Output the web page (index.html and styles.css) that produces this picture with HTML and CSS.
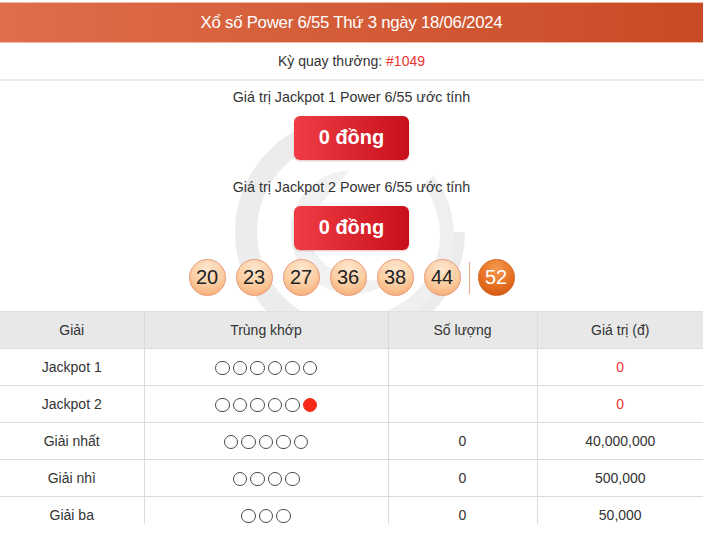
FILE: index.html
```html
<!DOCTYPE html>
<html lang="vi">
<head>
<meta charset="utf-8">
<title>Xổ số Power 6/55</title>
<link rel="stylesheet" href="styles.css">
</head>
<body>
<div class="page">
  <svg class="watermark" width="240" height="240" viewBox="0 0 240 240" aria-hidden="true">
    <path d="M120 16 A104 104 0 1 0 224 120" fill="none" stroke="#ececec" stroke-width="22"/>
    <path d="M198 68 A88 88 0 0 1 150 208" fill="none" stroke="#efefef" stroke-width="14"/>
    <path d="M120 58 A62 62 0 1 0 177 150 A42 42 0 0 1 120 162 A42 42 0 0 1 88 95 Z" fill="#f1f1f1"/>
  </svg>
  <div class="header">Xổ số Power 6/55 Thứ 3 ngày 18/06/2024</div>
  <div class="draw">Kỳ quay thưởng: <span class="red">#1049</span></div>
  <div class="jackpots">
    <div class="jp-label first">Giá trị Jackpot 1 Power 6/55 ước tính</div>
    <div class="jp-btn">0 đồng</div>
    <div class="jp-label">Giá trị Jackpot 2 Power 6/55 ước tính</div>
    <div class="jp-btn">0 đồng</div>
    <div class="balls">
      <span class="ball">20</span>
      <span class="ball">23</span>
      <span class="ball">27</span>
      <span class="ball">36</span>
      <span class="ball">38</span>
      <span class="ball">44</span>
      <span class="sep"></span>
      <span class="ball power">52</span>
    </div>
  </div>
  <div class="table-wrap">
    <table class="prizes">
      <colgroup>
        <col class="c1"><col class="c2"><col class="c3"><col class="c4">
      </colgroup>
      <thead>
        <tr><th>Giải</th><th>Trùng khớp</th><th>Số lượng</th><th>Giá trị (đ)</th></tr>
      </thead>
      <tbody>
        <tr><td>Jackpot 1</td><td><span class="dots"><i></i><i></i><i></i><i></i><i></i><i></i></span></td><td></td><td class="red">0</td></tr>
        <tr><td>Jackpot 2</td><td><span class="dots"><i></i><i></i><i></i><i></i><i></i><i class="fill"></i></span></td><td></td><td class="red">0</td></tr>
        <tr><td>Giải nhất</td><td><span class="dots"><i></i><i></i><i></i><i></i><i></i></span></td><td>0</td><td>40,000,000</td></tr>
        <tr><td>Giải nhì</td><td><span class="dots"><i></i><i></i><i></i><i></i></span></td><td>0</td><td>500,000</td></tr>
        <tr><td>Giải ba</td><td><span class="dots"><i></i><i></i><i></i></span></td><td>0</td><td>50,000</td></tr>
      </tbody>
    </table>
  </div>
</div>
</body>
</html>
```
FILE: styles.css
```css
html, body {
  margin: 0;
  padding: 0;
  background: #fff;
}
body {
  font-family: "Liberation Sans", Arial, sans-serif;
  color: #333;
  font-size: 14px;
}
.page {
  position: relative;
  width: 703px;
  height: 542px;
  overflow: hidden;
}
.watermark {
  position: absolute;
  left: 230px;
  top: 112px;
  z-index: 0;
}
.header, .draw, .jackpots, .table-wrap {
  position: relative;
  z-index: 1;
}
.header {
  margin-top: 2px;
  height: 39px;
  line-height: 39px;
  border-top: 1px solid #f2b8a6;
  border-bottom: 1px solid #f2b8a6;
  background: linear-gradient(to right, #df6e4a, #c84a25);
  color: #fff;
  text-align: center;
  font-size: 16.8px;
  letter-spacing: -0.25px;
}
.draw {
  height: 36px;
  line-height: 36px;
  text-align: center;
  border-bottom: 2px solid #ebebeb;
}
.red { color: #ed3434; }
.jackpots {
  display: flex;
  flex-direction: column;
  align-items: center;
}
.jp-label {
  margin-top: 18px;
  line-height: 18px;
  font-size: 14.3px;
}
.jp-label.first { margin-top: 7px; }
.jp-btn {
  margin-top: 10px;
  width: 115px;
  height: 44px;
  line-height: 42px;
  border-radius: 6px;
  background: linear-gradient(to right, #f03d45, #c70f1a);
  box-shadow: 0 1px 2px rgba(150, 0, 0, 0.25);
  color: #fff;
  font-weight: bold;
  font-size: 20px;
  text-align: center;
}
.balls {
  margin-top: 9px;
  display: flex;
  align-items: center;
  gap: 10px;
}
.ball {
  width: 35px;
  height: 35px;
  border-radius: 50%;
  border: 1px solid #e89a7a;
  background: radial-gradient(circle at 50% 25%, #fde6cf 0%, #fbcfa4 50%, #f5a368 100%);
  color: #222;
  font-size: 20px;
  line-height: 35px;
  text-align: center;
}
.ball.power {
  border-color: #d76a2a;
  background: radial-gradient(circle at 50% 25%, #f59a4e 0%, #e66f22 55%, #c9500f 100%);
  color: #fff;
}
.sep {
  width: 1px;
  height: 32px;
  background: #e9a98a;
  margin: 0 -2px;
}
.table-wrap {
  margin-top: 15px;
  height: 213px;
  overflow: hidden;
}
.prizes {
  width: 703px;
  border-collapse: collapse;
  table-layout: fixed;
}
.c1 { width: 144px; }
.c2 { width: 244px; }
.c3 { width: 149px; }
.c4 { width: 166px; }
.prizes th {
  background: #e8e8e8;
  font-weight: normal;
  height: 36px;
  padding: 0;
  border-left: 1px solid #dcdcdc;
  border-top: 1px solid #e0e0e0;
  border-bottom: 1px solid #dcdcdc;
}
.prizes td {
  height: 36px;
  padding: 0;
  text-align: center;
  border-left: 1px solid #dcdcdc;
  border-bottom: 1px solid #dcdcdc;
}
.prizes th:first-child, .prizes td:first-child { border-left: none; }
.dots {
  display: inline-flex;
  gap: 3px;
  vertical-align: middle;
}
.dots i {
  display: block;
  width: 12.5px;
  height: 12.5px;
  border: 1.5px solid #4a4a4a;
  border-radius: 50%;
}
.dots i.fill {
  background: #f52b17;
  border-color: #f52b17;
}
```
